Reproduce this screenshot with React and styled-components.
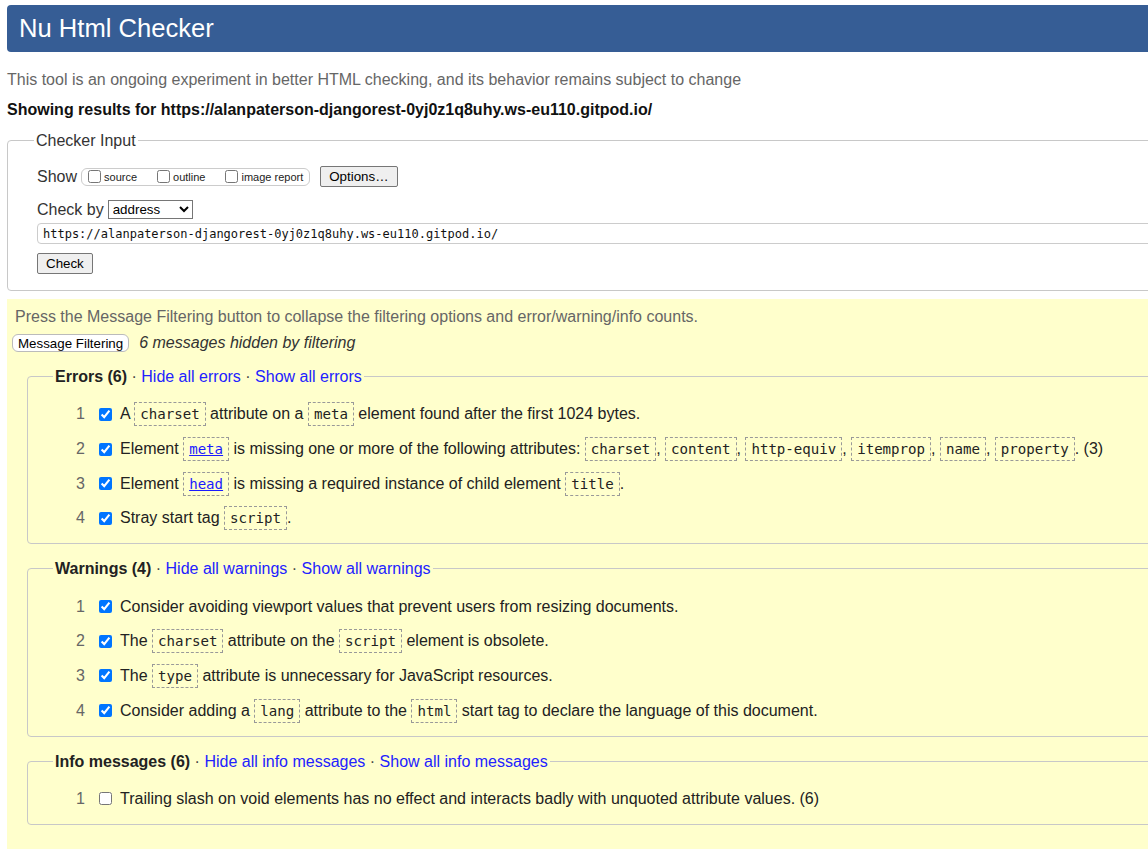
import React from 'react';
import styled, { createGlobalStyle } from 'styled-components';

const GlobalStyle = createGlobalStyle`
    html, body {
        margin: 0;
        padding: 0;
        overflow: hidden;
        background: #fff;
    }
    body {
        font-family: "Liberation Sans", Arial, sans-serif;
        font-size: 16px;
        color: #222;
    }
`;

const Page = styled.div`
    width: 1400px;
    padding: 5px 0 0 7px;
`;

const Header = styled.h1`
    margin: 0;
    height: 47px;
    line-height: 47px;
    padding-left: 12px;
    background: #365d95;
    color: #fff;
    font-size: 25.6px;
    font-weight: normal;
    border-radius: 4px 0 0 4px;
`;

const Intro = styled.p`
    margin: 17.5px 0 0;
    line-height: 19px;
    color: #666;
`;

const Showing = styled.p`
    margin: 11px 0 0;
    line-height: 19px;
    font-weight: bold;
    color: #111;
`;

const Fieldset = styled.fieldset`
    margin: ${p => p.$top || '0'} 0 0 ${p => p.$left || '0'};
    padding: ${p => p.$pad};
    border: 1px solid #c8c8c8;
    border-radius: 4px;
    min-width: 0;
`;

const Legend = styled.legend`
    padding: 0 2px;
    line-height: 19px;
    color: ${p => p.$muted ? '#333' : '#222'};
`;

const InputArea = styled.div`
    padding: 16px 0 0 3px;
    color: #333;
`;

const Row = styled.div`
    display: flex;
    align-items: center;
    height: 22px;
    margin-top: ${p => p.$mt || '0'};
`;

const ShowBox = styled.span`
    display: inline-flex;
    align-items: center;
    height: 16px;
    margin-left: 4px;
    padding: 0 6px 0 6px;
    border: 1px solid #ccc;
    border-radius: 6px;
`;

const SmallLabel = styled.label`
    display: inline-flex;
    align-items: center;
    font-size: 11px;
    color: #222;
    margin-right: ${p => p.$last ? '0' : '20px'};
    input {
        margin: 0 3px 0 0;
        width: 13px;
        height: 13px;
    }
`;

const Button = styled.button`
    font-family: "Liberation Sans", Arial, sans-serif;
    font-size: 13.33px;
    color: #000;
    background: #efefef;
    border: 1px solid #767676;
    border-radius: 2px;
    padding: 0 8px;
    height: 21px;
    margin-left: ${p => p.$ml || '0'};
`;

const Select = styled.select`
    font-family: "Liberation Sans", Arial, sans-serif;
    font-size: 13.33px;
    width: 85px;
    height: 19px;
    margin-left: 4px;
    padding: 0;
    border: 1px solid #767676;
    border-radius: 0;
    background: #fff;
    color: #000;
`;

const UrlInput = styled.input`
    display: block;
    box-sizing: border-box;
    width: 1360px;
    height: 21px;
    margin-top: 2.5px;
    padding: 0 5px;
    border: 1px solid #ccc;
    border-radius: 4px;
    font-family: "DejaVu Sans Mono", "Liberation Mono", monospace;
    font-size: 12px;
    color: #111;
`;

const CheckRow = styled.div`
    margin-top: 9px;
`;

const Results = styled.div`
    margin-top: 8px;
    background: #ffffcc;
    padding: 7.5px 0 24px 0;
`;

const Hint = styled.p`
    margin: 0 0 0 8px;
    line-height: 19px;
    color: #666;
`;

const FilterRow = styled.div`
    display: flex;
    align-items: center;
    height: 18px;
    margin: 8.5px 0 0 5px;
`;

const FilterButton = styled.button`
    font-family: "Liberation Sans", Arial, sans-serif;
    font-size: 13.33px;
    color: #000;
    height: 18px;
    padding: 0 5px;
    background: #fff;
    border: 1px solid #bbb;
    border-radius: 6px;
`;

const Hidden = styled.em`
    margin-left: 10px;
    color: #333;
`;

const Sep = styled.span`
    color: #444;
`;

const Link = styled.a`
    color: #2222ff;
    text-decoration: none;
`;

const List = styled.ol`
    list-style: none;
    margin: 11px 0 0;
    padding: 0;
`;

const Item = styled.li`
    display: flex;
    align-items: center;
    height: 34.7px;
`;

const Num = styled.span`
    width: 32px;
    text-align: right;
    color: #666;
    margin-right: 14px;
`;

const Box = styled.input`
    margin: 0 8px 0 0;
    width: 13px;
    height: 13px;
`;

const Message = styled.span`
    line-height: 26px;
    color: #222;
    white-space: nowrap;
`;

const Code = styled.code`
    font-family: "DejaVu Sans Mono", "Liberation Mono", monospace;
    font-size: 14.1px;
    padding: 3px 5px;
    border: 1px dashed #999;
    color: #222;
    a {
        color: #1a1aff;
        text-decoration: underline;
    }
`;

const errors = [
    <>A <Code>charset</Code> attribute on a <Code>meta</Code> element found after the first 1024 bytes.</>,
    <>Element <Code><a href="#meta">meta</a></Code> is missing one or more of the following attributes: <Code>charset</Code>, <Code>content</Code>, <Code>http-equiv</Code>, <Code>itemprop</Code>, <Code>name</Code>, <Code>property</Code>. (3)</>,
    <>Element <Code><a href="#head">head</a></Code> is missing a required instance of child element <Code>title</Code>.</>,
    <>Stray start tag <Code>script</Code>.</>,
];

const warnings = [
    <>Consider avoiding viewport values that prevent users from resizing documents.</>,
    <>The <Code>charset</Code> attribute on the <Code>script</Code> element is obsolete.</>,
    <>The <Code>type</Code> attribute is unnecessary for JavaScript resources.</>,
    <>Consider adding a <Code>lang</Code> attribute to the <Code>html</Code> start tag to declare the language of this document.</>,
];

const infos = [
    <>Trailing slash on void elements has no effect and interacts badly with unquoted attribute values. (6)</>,
];

const Group = ({ title, hide, show, items, checked, top }) => (
    <Fieldset $top={top} $left="20px" $pad="0 0 7.5px 25px">
        <Legend>
            <b>{title}</b> <Sep>·</Sep> <Link href="#">{hide}</Link> <Sep>·</Sep> <Link href="#">{show}</Link>
        </Legend>
        <List>
            {items.map((msg, i) => (
                <Item key={i}>
                    <Num>{i + 1}</Num>
                    <Box type="checkbox" defaultChecked={checked} />
                    <Message>{msg}</Message>
                </Item>
            ))}
        </List>
    </Fieldset>
);

const App = () => {
    const url = 'https://alanpaterson-djangorest-0yj0z1q8uhy.ws-eu110.gitpod.io/';
    return (
        <Page>
            <GlobalStyle />
            <Header>Nu Html Checker</Header>
            <Intro>This tool is an ongoing experiment in better HTML checking, and its behavior remains subject to change</Intro>
            <Showing>Showing results for {url}</Showing>

            <Fieldset $top="12px" $pad="0 0 16px 26px">
                <Legend $muted>Checker Input</Legend>
                <InputArea>
                    <Row>
                        Show
                        <ShowBox>
                            <SmallLabel><input type="checkbox" />source</SmallLabel>
                            <SmallLabel><input type="checkbox" />outline</SmallLabel>
                            <SmallLabel $last><input type="checkbox" />image report</SmallLabel>
                        </ShowBox>
                        <Button $ml="10px">Options…</Button>
                    </Row>
                    <Row $mt="11px">
                        Check by
                        <Select defaultValue="address">
                            <option value="address">address</option>
                            <option value="file">file upload</option>
                            <option value="text">text input</option>
                        </Select>
                    </Row>
                    <UrlInput type="text" defaultValue={url} />
                    <CheckRow>
                        <Button>Check</Button>
                    </CheckRow>
                </InputArea>
            </Fieldset>

            <Results>
                <Hint>Press the Message Filtering button to collapse the filtering options and error/warning/info counts.</Hint>
                <FilterRow>
                    <FilterButton>Message Filtering</FilterButton>
                    <Hidden>6 messages hidden by filtering</Hidden>
                </FilterRow>
                <Group top="15px" title="Errors (6)" hide="Hide all errors" show="Show all errors" items={errors} checked />
                <Group top="15px" title="Warnings (4)" hide="Hide all warnings" show="Show all warnings" items={warnings} checked />
                <Group top="15px" title="Info messages (6)" hide="Hide all info messages" show="Show all info messages" items={infos} checked={false} />
            </Results>
        </Page>
    );
};

export default App;
